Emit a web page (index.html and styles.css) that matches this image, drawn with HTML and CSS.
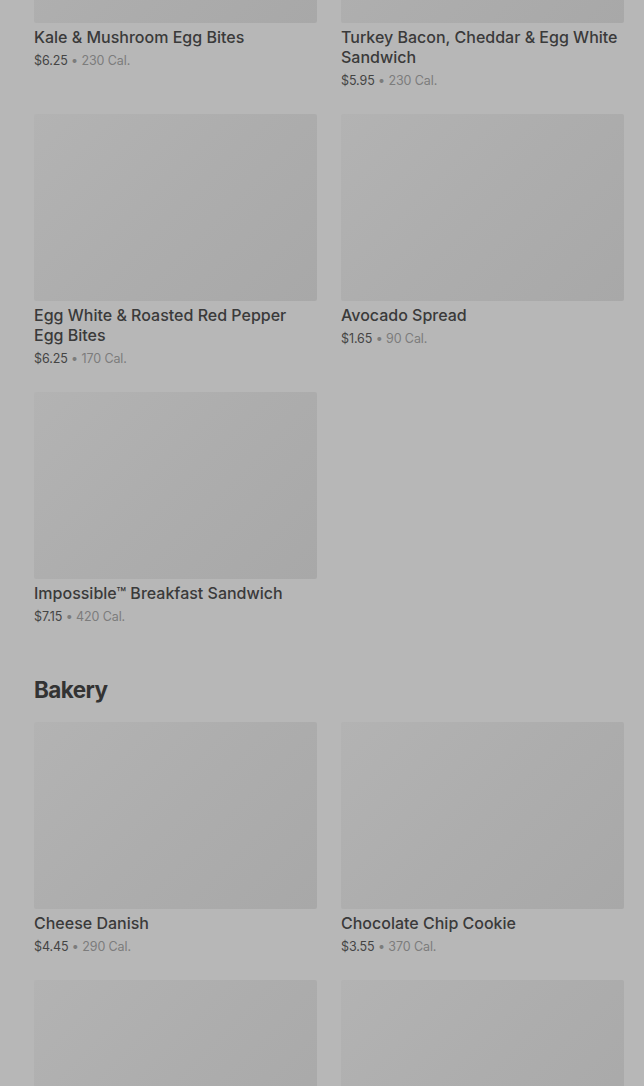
FILE: index.html
```html
<!DOCTYPE html>
<html lang="en">
<head>
    <meta charset="UTF-8">
    <title>Menu</title>
    <link rel="stylesheet" href="styles.css">
</head>
<body>
    <div class="menu">
        <section class="category">
            <div class="items">
                <div class="item">
                    <div class="thumb"></div>
                    <h3 class="name">Kale &amp; Mushroom Egg Bites</h3>
                    <p class="meta"><span class="price">$6.25</span> • 230 Cal.</p>
                </div>
                <div class="item">
                    <div class="thumb"></div>
                    <h3 class="name">Turkey Bacon, Cheddar &amp; Egg White Sandwich</h3>
                    <p class="meta"><span class="price">$5.95</span> • 230 Cal.</p>
                </div>
                <div class="item">
                    <div class="thumb"></div>
                    <h3 class="name">Egg White &amp; Roasted Red Pepper Egg Bites</h3>
                    <p class="meta"><span class="price">$6.25</span> • 170 Cal.</p>
                </div>
                <div class="item">
                    <div class="thumb"></div>
                    <h3 class="name">Avocado Spread</h3>
                    <p class="meta"><span class="price">$1.65</span> • 90 Cal.</p>
                </div>
                <div class="item">
                    <div class="thumb"></div>
                    <h3 class="name">Impossible™ Breakfast Sandwich</h3>
                    <p class="meta"><span class="price">$7.15</span> • 420 Cal.</p>
                </div>
            </div>
        </section>

        <section class="category">
            <h2 class="category-title">Bakery</h2>
            <div class="items">
                <div class="item">
                    <div class="thumb"></div>
                    <h3 class="name">Cheese Danish</h3>
                    <p class="meta"><span class="price">$4.45</span> • 290 Cal.</p>
                </div>
                <div class="item">
                    <div class="thumb"></div>
                    <h3 class="name">Chocolate Chip Cookie</h3>
                    <p class="meta"><span class="price">$3.55</span> • 370 Cal.</p>
                </div>
                <div class="item">
                    <div class="thumb"></div>
                </div>
                <div class="item">
                    <div class="thumb"></div>
                </div>
            </div>
        </section>
    </div>
</body>
</html>
```

FILE: styles.css
```css
/* menu page, dimmed behind a modal */

body {
    margin: 0;
    background-color: #b7b7b7;
    font-family: Inter, 'Noto Sans', sans-serif;
    color: #383838;
    overflow: hidden;
}

.menu {
    padding: 0 20px 0 34px;
    margin-top: -164px;
}

.items {
    display: grid;
    grid-template-columns: 283px 283px;
    column-gap: 24px;
    row-gap: 23px;
}

.thumb {
    height: 187px;
    border-radius: 2px;
    background: linear-gradient(135deg, #b3b3b3 0%, #adadad 50%, #a8a8a8 100%);
}

.name {
    margin: 4px 0 0;
    font-size: 16px;
    line-height: 20px;
    font-weight: 500;
    color: #3a3a3a;
}

.meta {
    margin: 4px 0 0;
    font-size: 12.5px;
    line-height: 20px;
    letter-spacing: -0.1px;
    color: #7c7c7c;
}

.price {
    color: #444;
}

.category-title {
    margin: 47px 0 16px;
    font-size: 22.5px;
    line-height: 32px;
    font-weight: 700;
    letter-spacing: -0.6px;
    color: #333;
}
```
